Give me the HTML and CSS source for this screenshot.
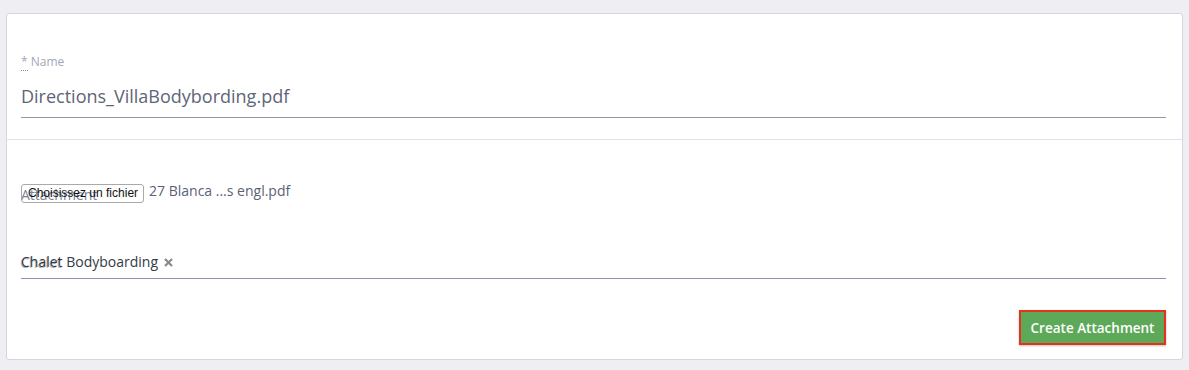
FILE: index.html
```html
<!DOCTYPE html>
<html>
<head>
<meta charset="utf-8">
<link rel="stylesheet" href="styles.css">
</head>
<body>
<div class="card">
  <div class="section name-section">
    <div class="label"><span class="req">*</span> Name</div>
    <div class="value">Directions_VillaBodybording.pdf</div>
  </div>
  <div class="section second-section">
    <div class="file-row">
      <span class="overlay-label attach-label">Attachment</span>
      <span class="file-btn">Choisissez un fichier</span>
      <span class="file-name">27 Blanca ...s engl.pdf</span>
    </div>
    <div class="chalet-field">
      <span class="overlay-label chalet-label">Chalet</span>
      <span class="chip">Chalet Bodyboarding</span>
      <svg class="chip-x" width="9" height="9" viewBox="0 0 9 9"><path d="M1 1 L8 8 M8 1 L1 8" stroke="#8a8a8a" stroke-width="2.2" stroke-linecap="butt"/></svg>
    </div>
    <div class="actions">
      <button class="create-btn">Create Attachment</button>
    </div>
  </div>
</div>
</body>
</html>
```

FILE: styles.css
```css
html, body {
  margin: 0;
  padding: 0;
  background: #eeeef3;
  font-family: "Open Sans", "Noto Sans", sans-serif;
}

.card {
  margin: 13px 6px 0 6px;
  background: #ffffff;
  border: 1px solid #d4d5dd;
  border-radius: 3px;
}

.name-section {
  padding: 40px 16px 21px 14px;
}

.label {
  font-size: 12px;
  line-height: 16px;
  color: #a3a8b7;
}

.req {
  border-bottom: 1px dotted #8a8f9e;
}

.value {
  margin-top: 14px;
  font-size: 18px;
  line-height: 24px;
  color: #5e6578;
  padding-bottom: 9px;
  border-bottom: 1px solid #929aa8;
}

.second-section {
  border-top: 1px solid #e2e2e8;
  padding: 43px 16px 14px 14px;
}

.file-row {
  position: relative;
  display: flex;
  align-items: center;
  height: 20px;
}

.overlay-label {
  position: absolute;
  left: 0;
  font-size: 14px;
  line-height: 20px;
}

.attach-label {
  top: 2px;
  color: #7a8296;
}

.file-btn {
  position: relative;
  box-sizing: border-box;
  height: 19px;
  padding: 0 5px 0 6px;
  border: 1px solid #a9a9a9;
  border-radius: 3px;
  background: transparent;
  font-family: "Liberation Sans", Arial, sans-serif;
  font-size: 12px;
  line-height: 17px;
  color: #111111;
}

.file-name {
  margin-left: 5px;
  margin-top: -4px;
  font-size: 14px;
  line-height: 20px;
  color: #5a6277;
}

.chalet-field {
  position: relative;
  margin-top: 49px;
  display: flex;
  align-items: center;
  padding-bottom: 6px;
  border-bottom: 1px solid #8c95b0;
  height: 20px;
}

.chalet-label {
  top: 1px;
  left: -1px;
  color: #b4b4b4;
}

.chip {
  position: relative;
  font-size: 14px;
  line-height: 20px;
  color: #333a44;
}

.chip-x {
  margin-left: 6px;
  margin-top: 1px;
}

.actions {
  display: flex;
  justify-content: flex-end;
  margin-top: 31px;
}

.create-btn {
  box-sizing: border-box;
  width: 147px;
  height: 35px;
  border: 2px solid #e6321d;
  background: #5ea859;
  color: #ffffff;
  font-family: "Open Sans", "Noto Sans", sans-serif;
  font-weight: 600;
  font-size: 13.5px;
  padding: 0;
  box-shadow: 0 1px 2px rgba(0, 0, 0, 0.25);
  cursor: pointer;
}
```
